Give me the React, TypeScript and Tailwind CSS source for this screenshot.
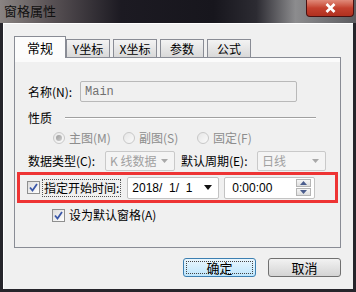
import React from 'react';

const Check = () => (
  <svg width="9" height="9" viewBox="0 0 9 9">
    <path d="M1 4.5 L3.5 7.5 L8 1" fill="none" stroke="#3a57a8" strokeWidth="1.8" />
  </svg>
);

const CheckBox = () => (
  <div className="w-[13px] h-[13px] border border-[#8e8f8f] bg-gradient-to-br from-[#dcdcdc] to-[#ffffff] flex items-center justify-center shrink-0">
    <Check />
  </div>
);

const Radio = ({ on }: { on?: boolean }) => (
  <div className="w-[12px] h-[12px] rounded-full border border-[#c8c8c8] bg-gradient-to-br from-[#e6e6e6] to-[#fafafa] flex items-center justify-center shrink-0">
    {on && <div className="w-[6px] h-[6px] rounded-full bg-gradient-to-br from-[#9a9a9a] to-[#cfcfcf]" />}
  </div>
);

const Combo = ({ text, w }: { text: string; w: string }) => (
  <div className={`${w} h-[20px] border border-[#c9c9c9] rounded-[2px] bg-[#f4f4f4] flex items-center justify-between pl-[4px] pr-[6px] text-[#a0a0a0]`}>
    <span>{text}</span>
    <svg width="7" height="4" viewBox="0 0 7 4">
      <path d="M0 0 H7 L3.5 4 Z" fill="#a8a8a8" />
    </svg>
  </div>
);

const Tab = ({ label }: { label: string }) => (
  <div className="w-[44px] h-[18px] mt-[3px] border border-b-0 border-[#898c95] bg-gradient-to-b from-[#f3f3f3] to-[#d9d9d9] flex items-center justify-center">
    {label}
  </div>
);

export default function App() {
  return (
    <div className="w-[356px] h-[292px] bg-[#26252b] flex flex-col font-['Noto_Sans_CJK_SC',sans-serif] text-[12px] text-black leading-none overflow-hidden">
      {/* title bar */}
      <div className="h-[23px] shrink-0 flex justify-between bg-[linear-gradient(90deg,#8a8482_0%,#5a5356_14%,#1c1a22_34%,#17161d_60%,#2c2b32_72%,#8c8c8e_83%,#5c5c60_100%)]">
        <span className="pl-[4px] pt-[4px] text-[13px] text-[#101010]">窗格属性</span>
        <div className="w-[48px] h-[17px] mr-[2px] rounded-b-[4px] border border-t-0 border-[#4a1010] bg-gradient-to-b from-[#e08a7a] via-[#c4412f] to-[#b0301f] flex items-center justify-center">
          <svg width="11" height="10" viewBox="0 0 11 10">
            <path d="M1.5 1 L9.5 9 M9.5 1 L1.5 9" stroke="#ffffff" strokeWidth="2.6" />
          </svg>
        </div>
      </div>

      {/* client */}
      <div className="flex-1 mx-[3px] mb-[3px] bg-[#f0f0f0] border-t border-l border-white flex flex-col">
        {/* tabs */}
        <div className="flex items-start ml-[10px] mt-[12px] h-[22px] relative z-10">
          <div className="w-[52px] h-[22px] border border-b-0 border-[#898c95] bg-[#fcfcfc] flex items-center justify-center text-[13px]">常规</div>
          <Tab label="Y坐标" />
          <div className="w-[3px]" />
          <Tab label="X坐标" />
          <div className="w-[3px]" />
          <Tab label="参数" />
          <div className="w-[3px]" />
          <Tab label="公式" />
        </div>

        {/* panel */}
        <div className="ml-[10px] -mt-[1px] w-[327px] h-[191px] border border-[#898c95] bg-[#f0f0f0] flex flex-col">
          <div className="h-[4px] bg-[#fbfbfb]" />
          <div className="flex items-center h-[21px] mt-[19px] pl-[13px]">
            <span className="w-[52px]">名称(N):</span>
            <div className="w-[217px] h-[21px] border border-[#b9b9b9] rounded-[2px] bg-[#f0f0f0] flex items-center pl-[4px] font-['Liberation_Mono',monospace] text-[12px] text-[#707070]">Main</div>
          </div>
          <div className="flex items-center h-[18px] mt-[7px] pl-[13px]">
            <span className="w-[37px]">性质</span>
            <div className="w-[251px] h-[2px] border-t border-[#a0a0a0] border-b-white border-b" />
          </div>
          <div className="flex items-center h-[18px] mt-[2px] pl-[38px] text-[#8d8d8d]">
            <Radio on />
            <span className="ml-[4px] w-[54px]">主图(M)</span>
            <Radio />
            <span className="ml-[4px] w-[58px]">副图(S)</span>
            <Radio />
            <span className="ml-[4px]">固定(F)</span>
          </div>
          <div className="flex items-center h-[20px] mt-[4px] pl-[13px]">
            <span className="w-[77px]">数据类型(C):</span>
            <Combo text="K 线数据" w="w-[70px]" />
            <span className="ml-[6px] w-[76px]">默认周期(E):</span>
            <Combo text="日线" w="w-[69px]" />
          </div>

          {/* highlighted row */}
          <div className="ml-[2px] mt-[1px] w-[321px] h-[31px] border-[3px] border-[#ee3434] flex items-center">
            <div className="ml-[7px]">
              <CheckBox />
            </div>
            <span className="ml-[2px] px-[1px] py-[2px] border border-dotted border-[#555]">指定开始时间:</span>
            <div className="ml-[6px] w-[92px] h-[22px] border border-[#c3c3c3] rounded-[2px] bg-white flex items-center justify-between pl-[4px] pr-[6px] font-['Liberation_Sans',sans-serif] text-[12px]">
              <span className="whitespace-pre">2018/  1/  1</span>
              <svg width="8" height="5" viewBox="0 0 8 5">
                <path d="M0 0 H8 L4 5 Z" fill="#111" />
              </svg>
            </div>
            <div className="ml-[5px] w-[91px] h-[22px] border border-[#c3c3c3] rounded-[2px] bg-white flex items-center justify-between pl-[7px] pr-[3px] font-['Liberation_Sans',sans-serif] text-[12px]">
              <span>0:00:00</span>
              <div className="flex flex-col gap-[1px]">
                <div className="w-[15px] h-[8px] border border-[#b5b5b5] bg-gradient-to-b from-[#f6f6f6] to-[#dedede] flex items-center justify-center">
                  <svg width="7" height="4" viewBox="0 0 7 4"><path d="M0 4 H7 L3.5 0 Z" fill="#4a5c8c" /></svg>
                </div>
                <div className="w-[15px] h-[8px] border border-[#b5b5b5] bg-gradient-to-b from-[#f6f6f6] to-[#dedede] flex items-center justify-center">
                  <svg width="7" height="4" viewBox="0 0 7 4"><path d="M0 0 H7 L3.5 4 Z" fill="#4a5c8c" /></svg>
                </div>
              </div>
            </div>
          </div>

          <div className="flex items-center h-[16px] mt-[4px] pl-[37px]">
            <CheckBox />
            <span className="ml-[4px]">设为默认窗格(A)</span>
          </div>
        </div>

        {/* buttons */}
        <div className="flex ml-[179px] mt-[10px] gap-[12px]">
          <div className="w-[73px] h-[19px] rounded-[3px] border border-[#3c7fb1] bg-gradient-to-b from-[#eaf6fd] to-[#bee6fd] p-[2px]">
            <div className="w-full h-full border border-dotted border-[#444] flex items-center justify-center text-[13px]">确定</div>
          </div>
          <div className="w-[73px] h-[19px] rounded-[3px] border border-[#707070] bg-gradient-to-b from-[#f2f2f2] to-[#d4d4d4] flex items-center justify-center text-[13px]">取消</div>
        </div>
      </div>
    </div>
  );
}
